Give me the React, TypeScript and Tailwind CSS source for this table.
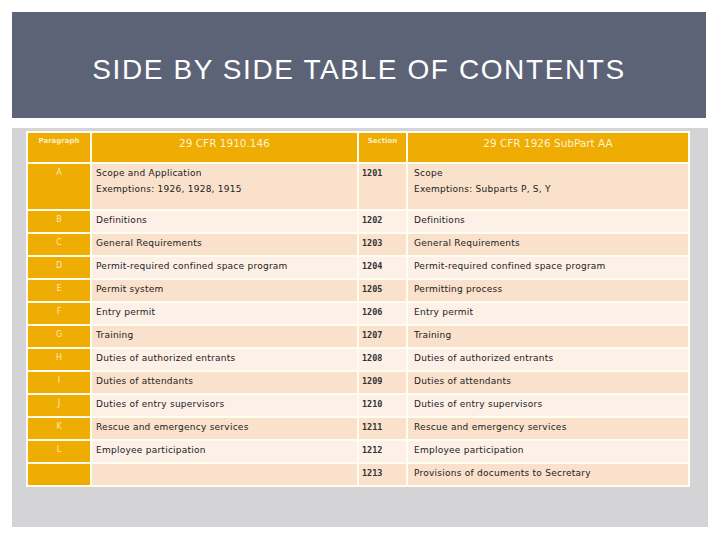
import React from "react";

const rows: [string, string[], string, string[]][] = [
  ["A", ["Scope and Application", "Exemptions: 1926, 1928, 1915"], "1201", ["Scope", "Exemptions:  Subparts P, S, Y"]],
  ["B", ["Definitions"], "1202", ["Definitions"]],
  ["C", ["General Requirements"], "1203", ["General Requirements"]],
  ["D", ["Permit-required confined space program"], "1204", ["Permit-required confined space program"]],
  ["E", ["Permit system"], "1205", ["Permitting process"]],
  ["F", ["Entry permit"], "1206", ["Entry permit"]],
  ["G", ["Training"], "1207", ["Training"]],
  ["H", ["Duties of authorized entrants"], "1208", ["Duties of authorized entrants"]],
  ["I", ["Duties of attendants"], "1209", ["Duties of attendants"]],
  ["J", ["Duties of entry supervisors"], "1210", ["Duties of entry supervisors"]],
  ["K", ["Rescue and emergency services"], "1211", ["Rescue and emergency services"]],
  ["L", ["Employee participation"], "1212", ["Employee participation"]],
  ["", [], "1213", ["Provisions of documents to Secretary"]],
];

const body = "font-['DejaVu_Sans',sans-serif] text-[9px] tracking-[0.25px] text-[#222] leading-[16px]";

export default function App() {
  return (
    <div className="w-[720px] h-[540px] bg-white pl-[12px] pt-[12px] flex flex-col gap-[10px]">
      <div className="w-[694px] h-[106px] bg-[#5c6377] flex items-center justify-center pt-[10px]">
        <div className="text-white font-['Liberation_Sans',sans-serif] text-[28px] tracking-[1.6px]">
          SIDE BY SIDE TABLE OF CONTENTS
        </div>
      </div>
      <div className="w-[696px] h-[399px] bg-[#d4d4d6] pl-[14px] pt-[3px]">
        <div className="w-[664px] bg-[#fffcf0] p-[2px] grid grid-cols-[62px_265px_47px_280px] grid-rows-[29px_45px_repeat(12,21px)] gap-[2px]">
          <div className="bg-[#efac02] flex justify-center pt-[3px] font-['DejaVu_Sans',sans-serif] text-[7px] font-bold text-[#fbeec5]">Paragraph</div>
          <div className="bg-[#efac02] flex justify-center pt-[3px] font-['DejaVu_Sans',sans-serif] text-[10.5px] text-[#fdf2d2]">29 CFR 1910.146</div>
          <div className="bg-[#efac02] flex justify-center pt-[3px] font-['DejaVu_Sans',sans-serif] text-[7px] font-bold text-[#fbeec5]">Section</div>
          <div className="bg-[#efac02] flex justify-center pt-[3px] font-['DejaVu_Sans',sans-serif] text-[10.5px] text-[#fdf2d2]">29 CFR 1926 SubPart AA</div>
          {rows.map(([p, l, s, r], i) => {
            const bg = i % 2 === 0 ? "bg-[#f9e1cc]" : "bg-[#fcf0e7]";
            return (
              <React.Fragment key={i}>
                <div className="bg-[#efac02] flex justify-center pt-[3px] font-['DejaVu_Sans',sans-serif] text-[8px] text-[#fbe9b8] leading-[12px]">{p}</div>
                <div className={`${bg} px-[4px] pt-[1px] ${body}`}>
                  {l.map((t) => (
                    <div key={t}>{t}</div>
                  ))}
                </div>
                <div className={`${bg} pl-[3px] pt-[3px] font-['DejaVu_Sans_Mono',monospace] text-[8.5px] font-bold text-[#333] leading-[12px]`}>{s}</div>
                <div className={`${bg} px-[6px] pt-[1px] ${body}`}>
                  {r.map((t) => (
                    <div key={t}>{t}</div>
                  ))}
                </div>
              </React.Fragment>
            );
          })}
        </div>
      </div>
    </div>
  );
}
